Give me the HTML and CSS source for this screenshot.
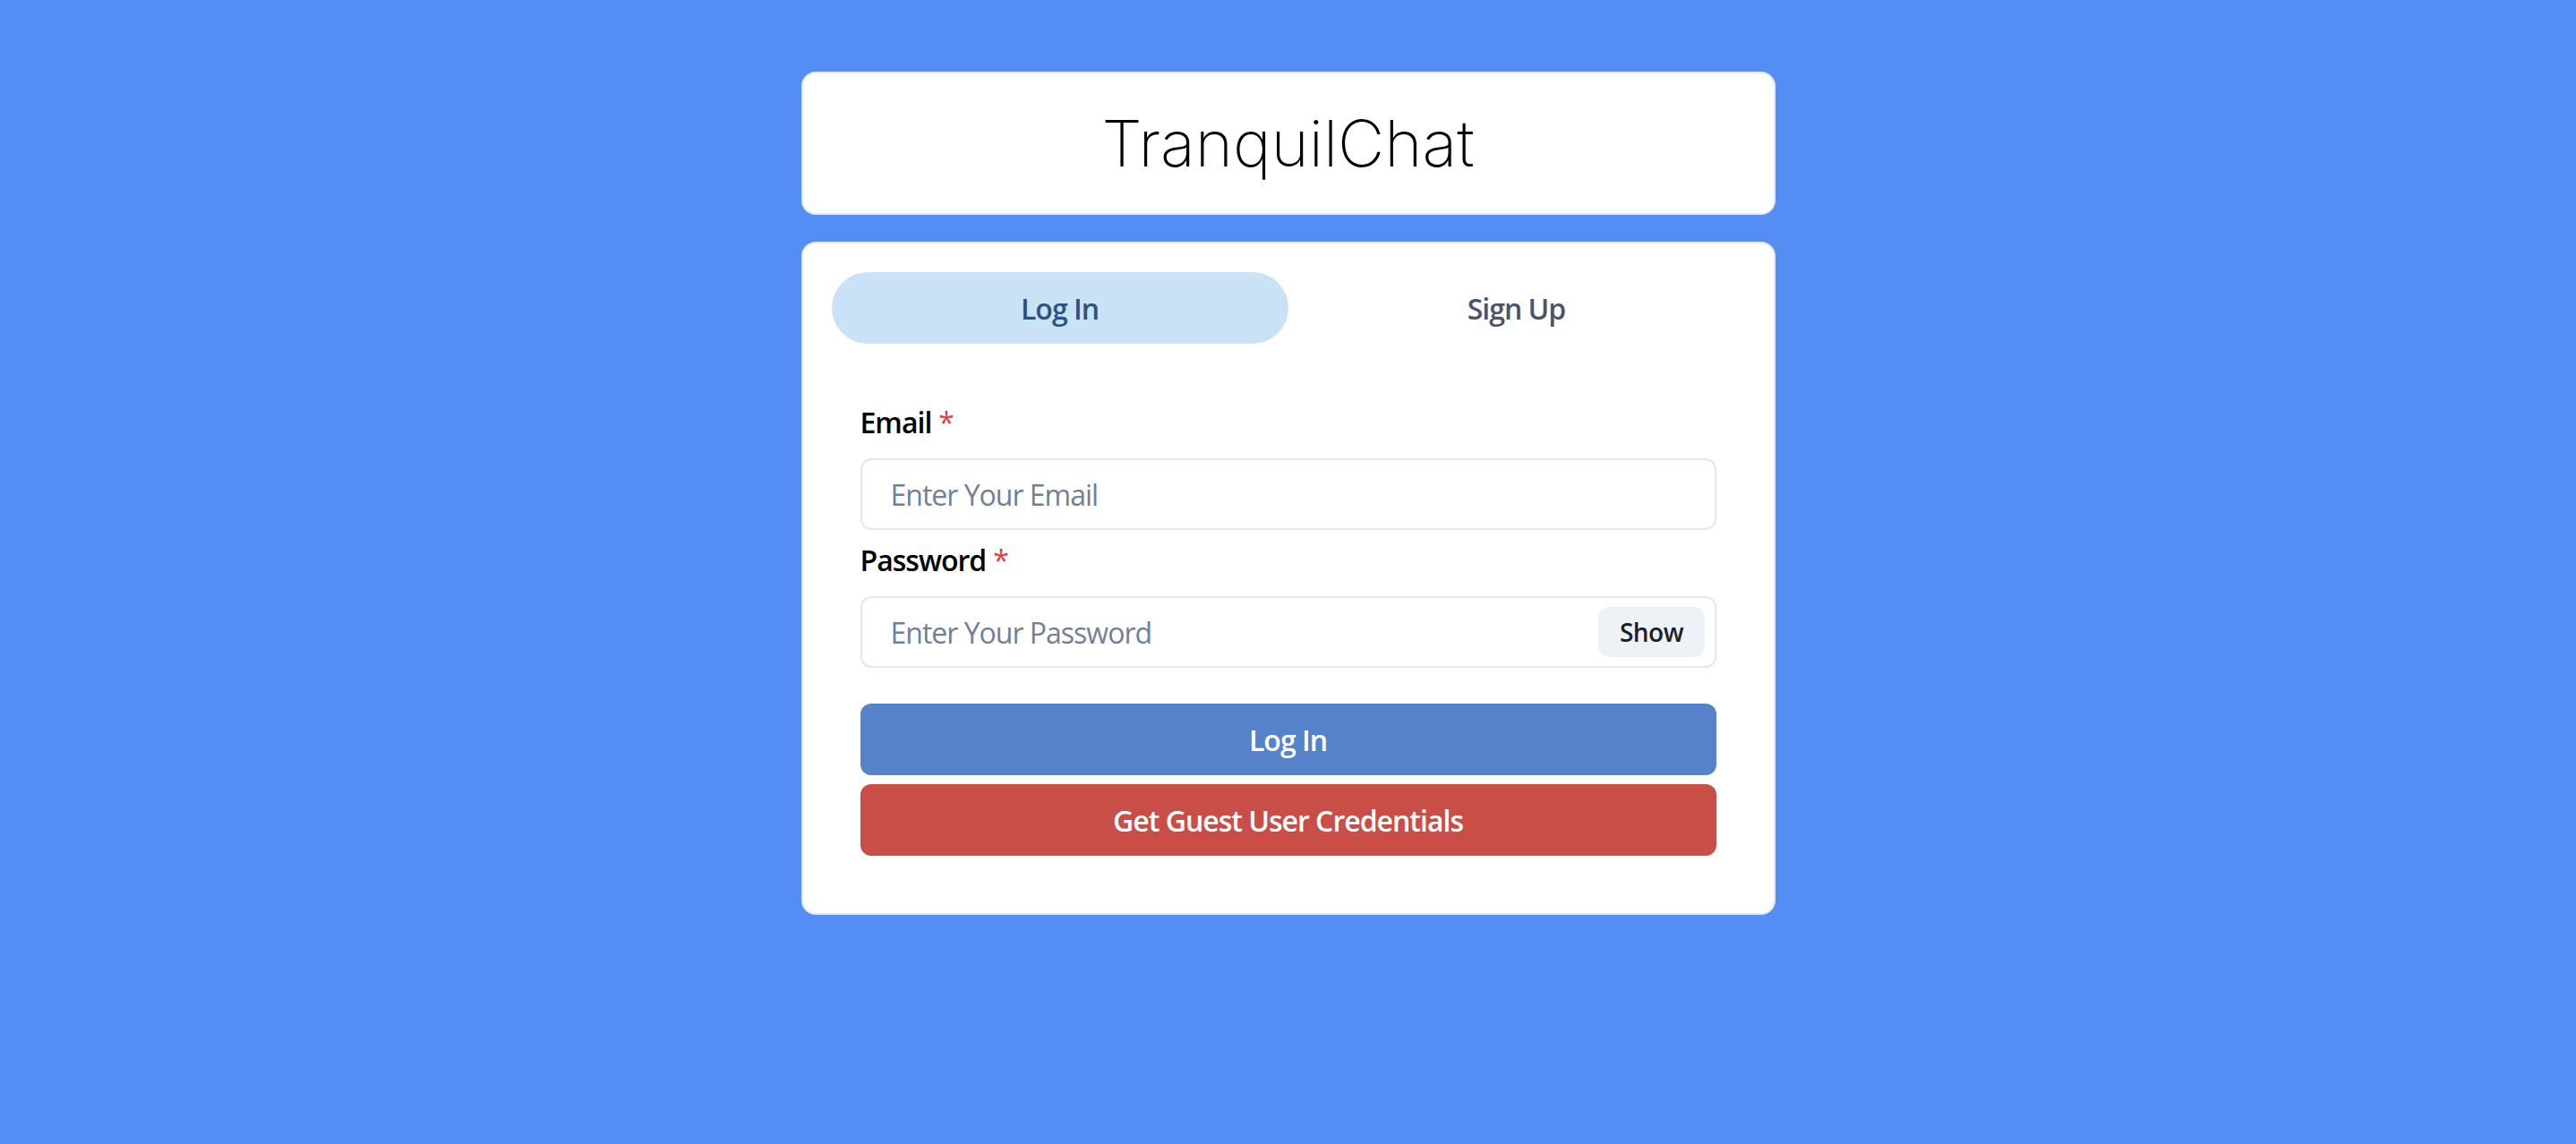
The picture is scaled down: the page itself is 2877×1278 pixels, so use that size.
FILE: index.html
```html
<!DOCTYPE html>
<html lang="en">
  <head>
    <meta charset="UTF-8" />
    <meta name="viewport" content="width=device-width, initial-scale=1.0" />
    <title>TranquilChat</title>
    <link rel="stylesheet" href="styles.css">
  </head>
  <body>
    <div class="container">
      <!-- Header -->
      <div class="brand-box">
        <p class="brand">TranquilChat</p>
      </div>

      <!-- Auth card -->
      <div class="auth-box">
        <div class="tab-list">
          <button class="tab active">Log In</button>
          <button class="tab">Sign Up</button>
        </div>

        <div class="tab-panel">
          <form class="form">
            <div class="field">
              <label class="label" for="email">Email<span class="req">*</span></label>
              <input class="input" id="email" type="email" placeholder="Enter Your Email">
            </div>

            <div class="field">
              <label class="label" for="password">Password<span class="req">*</span></label>
              <div class="input-group">
                <input class="input input-pass" id="password" type="password" placeholder="Enter Your Password">
                <div class="right-element">
                  <button type="button" class="show-btn">Show</button>
                </div>
              </div>
            </div>

            <button type="button" class="btn btn-blue">Log In</button>
            <button type="button" class="btn btn-red">Get Guest User Credentials</button>
          </form>
        </div>
      </div>
    </div>
  </body>
</html>
```

FILE: styles.css
```css
body {
  margin: 0;
  background-color: #548ef5;
  font-family: "Open Sans", "Noto Sans", sans-serif;
  letter-spacing: -1px;
  color: #1a202c;
}

.container {
  width: 1088px;
  margin: 0 auto;
  padding: 0 32px;
  display: flex;
  flex-direction: column;
}

.brand-box {
  background-color: #fff;
  margin: 80px 0 30px 0;
  padding: 24px;
  border: 2px solid #e2e8f0;
  border-radius: 16px;
  text-align: center;
}

.brand {
  margin: 0;
  font-family: "Inter", sans-serif;
  font-weight: 250;
  font-size: 72px;
  line-height: 108px;
  letter-spacing: 0;
  color: #000;
}

.auth-box {
  background-color: #fff;
  padding: 32px;
  border: 2px solid #e2e8f0;
  border-radius: 16px;
}

.tab-list {
  display: flex;
  margin-bottom: 32px;
}

.tab {
  flex: 1;
  height: 80px;
  border: none;
  border-radius: 9999px;
  background: transparent;
  font-family: inherit;
  font-size: 32px;
  font-weight: 600;
  letter-spacing: -1px;
  color: #4a5568;
}

.tab.active {
  background-color: #cae2f6;
  color: #2c5282;
}

.tab-panel {
  padding: 32px;
}

.form {
  display: flex;
  flex-direction: column;
  gap: 10px;
}

.label {
  display: block;
  margin-bottom: 16px;
  font-size: 32px;
  line-height: 48px;
  font-weight: 600;
  color: #000;
}

.req {
  margin-left: 8px;
  font-weight: 500;
  color: #e53e3e;
}

.input {
  box-sizing: border-box;
  width: 100%;
  height: 80px;
  padding: 0 32px;
  border: 2px solid #e2e8f0;
  border-radius: 12px;
  font-family: inherit;
  font-size: 32px;
  letter-spacing: -1px;
  color: #1a202c;
  outline: none;
}

.input::placeholder {
  color: #718096;
}

.input-group {
  position: relative;
}

.input-pass {
  padding-right: 144px;
}

.right-element {
  position: absolute;
  top: 0;
  right: 0;
  width: 144px;
  height: 80px;
  display: flex;
  align-items: center;
  justify-content: center;
}

.show-btn {
  height: 56px;
  padding: 0 24px;
  border: none;
  border-radius: 12px;
  background-color: #edf2f7;
  font-family: inherit;
  font-size: 28px;
  font-weight: 600;
  letter-spacing: -0.5px;
  color: #1a202c;
}

.btn {
  height: 80px;
  width: 100%;
  border: none;
  border-radius: 12px;
  font-family: inherit;
  font-size: 32px;
  font-weight: 600;
  letter-spacing: -1px;
  color: #fff;
}

.btn-blue {
  margin-top: 30px;
  background-color: #5582c8;
}

.btn-red {
  background-color: #c94e47;
}
```
